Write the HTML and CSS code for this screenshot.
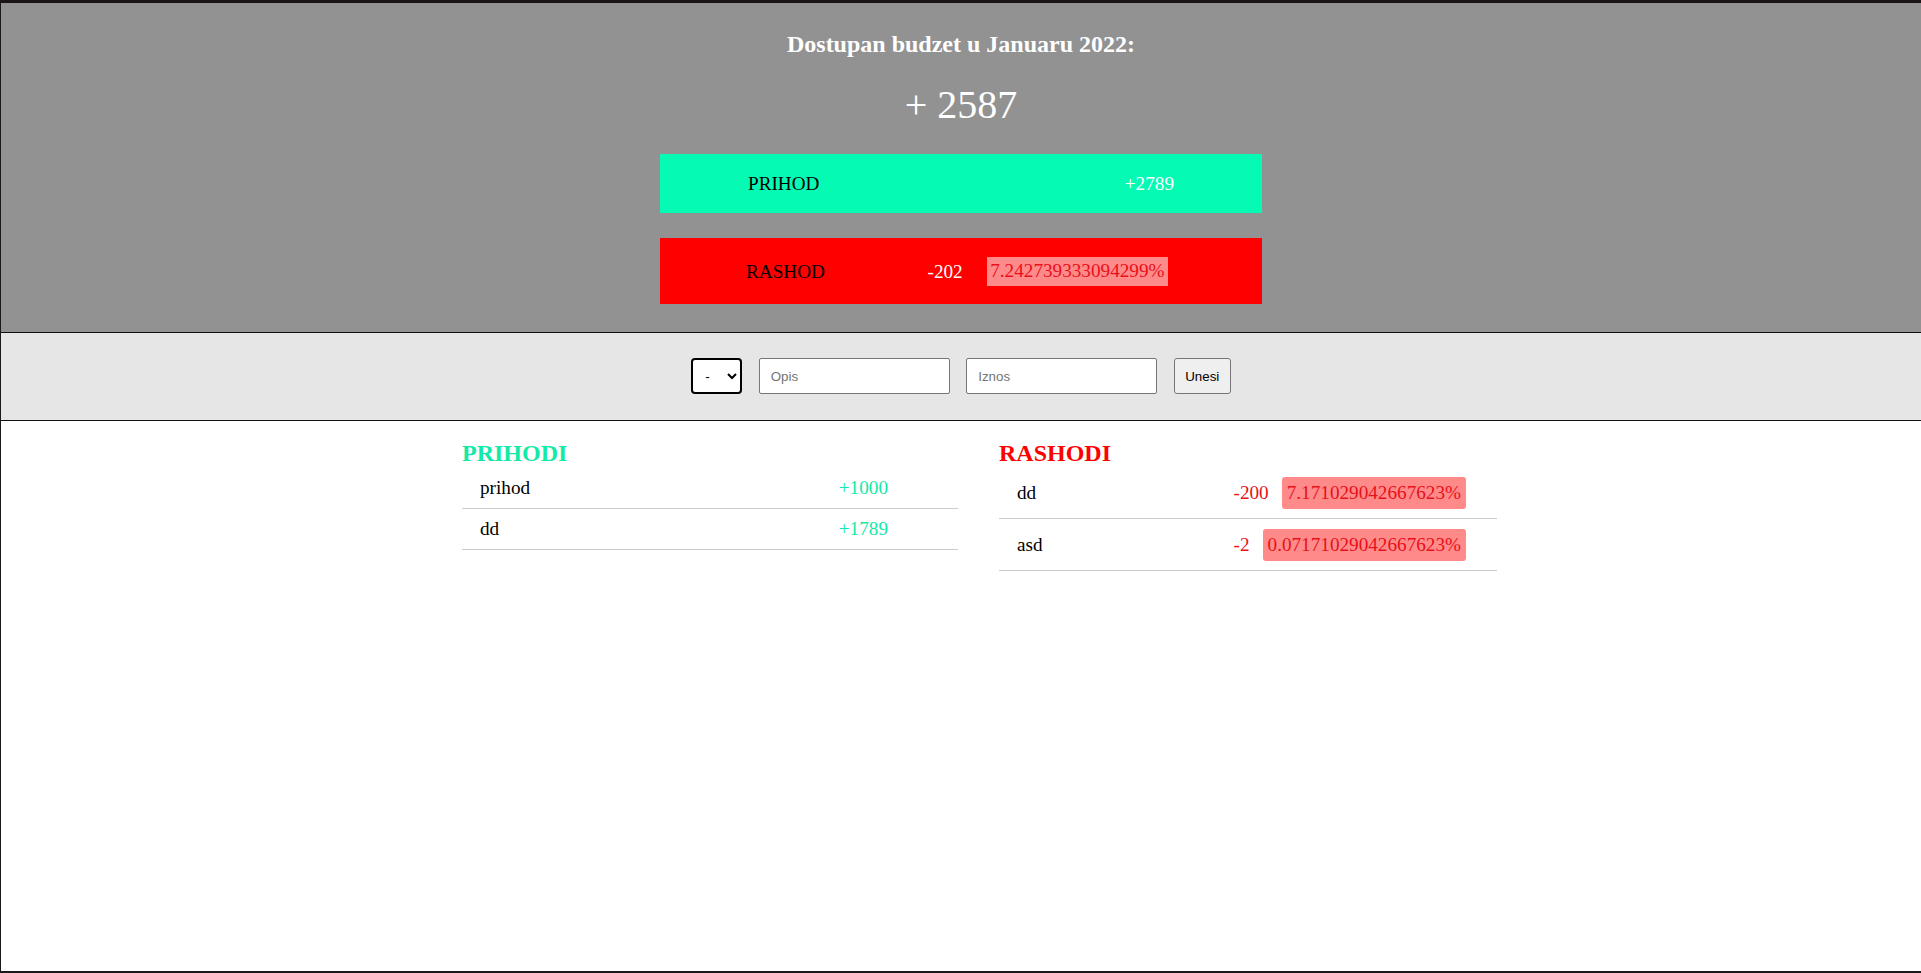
FILE: index.html
```html
<!DOCTYPE html>
<html lang="sr">
<head>
<meta charset="utf-8">
<title>Budzet</title>
<link rel="stylesheet" href="styles.css">
</head>
<body>
<div class="frame">
  <header class="top">
    <h2 class="title">Dostupan budzet u Januaru 2022:</h2>
    <div class="total">+ 2587</div>
    <div class="sum sum-inc">
      <span class="sum-label">PRIHOD</span>
      <span class="sum-val">+2789</span>
    </div>
    <div class="sum sum-exp">
      <span class="sum-label">RASHOD</span>
      <div class="sum-right">
        <span class="sum-val">-202</span>
        <span class="pct pct-top">7.242739333094299%</span>
      </div>
    </div>
  </header>

  <section class="entry">
    <select class="type">
      <option>-</option>
      <option>+</option>
    </select>
    <input class="field" type="text" placeholder="Opis">
    <input class="field" type="text" placeholder="Iznos">
    <button class="submit" type="button">Unesi</button>
  </section>

  <main class="lists">
    <section class="col col-inc">
      <h2 class="col-title">PRIHODI</h2>
      <div class="row">
        <span class="desc">prihod</span>
        <span class="val">+1000</span>
      </div>
      <div class="row">
        <span class="desc">dd</span>
        <span class="val">+1789</span>
      </div>
    </section>
    <section class="col col-exp">
      <h2 class="col-title">RASHODI</h2>
      <div class="row">
        <span class="desc">dd</span>
        <div class="row-right">
          <span class="val">-200</span>
          <span class="pct">7.171029042667623%</span>
        </div>
      </div>
      <div class="row">
        <span class="desc">asd</span>
        <div class="row-right">
          <span class="val">-2</span>
          <span class="pct">0.07171029042667623%</span>
        </div>
      </div>
    </section>
  </main>
</div>
</body>
</html>
```

FILE: styles.css
```css
html, body {
  margin: 0;
  padding: 0;
  background: #ffffff;
}

body {
  font-family: "Liberation Serif", "Times New Roman", serif;
  color: #000;
}

.frame {
  box-sizing: border-box;
  height: 973px;
  border-top: 3px solid #1c1315;
  border-left: 1px solid #1a1a1a;
  border-bottom: 2px solid #1a1a1a;
  background: #fff;
  overflow: hidden;
}

/* ---------- header ---------- */
.top {
  background: #929292;
  padding: 27px 0 28px;
  border-bottom: 1px solid #111;
  display: flex;
  flex-direction: column;
  align-items: center;
}

.title {
  margin: 0;
  font-size: 24px;
  line-height: 28px;
  font-weight: bold;
  color: #fff;
}

.total {
  margin-top: 24px;
  font-size: 40px;
  line-height: 46px;
  color: #fff;
}

.sum {
  box-sizing: border-box;
  width: 602px;
  display: flex;
  justify-content: space-between;
  align-items: center;
  font-size: 19.2px;
  line-height: 23px;
}

.sum-inc {
  margin-top: 26px;
  background: #05fbb4;
  padding: 18px 88px;
}

.sum-exp {
  margin-top: 25px;
  background: #ff0000;
  padding: 18.5px 94px 18.5px 86px;
}

.sum-label {
  color: #000;
}

.sum-val {
  color: #fff;
}

.sum-right {
  display: flex;
  align-items: center;
  gap: 24px;
}

.pct {
  background: #ff8a8a;
  color: #e8101a;
  border-radius: 3px;
  padding: 5px;
  line-height: 22px;
}

.pct-top {
  border-radius: 0;
  padding: 3.5px 3.5px;
  line-height: 22px;
}

/* ---------- entry form ---------- */
.entry {
  background: #e6e6e6;
  padding: 25px 0 26px;
  border-bottom: 1px solid #111;
  display: flex;
  justify-content: center;
  align-items: center;
  gap: 16.5px;
}

.type {
  box-sizing: border-box;
  width: 51px;
  height: 36px;
  border: 2px solid #000;
  border-radius: 4px;
  background: #fff;
  font-family: "Liberation Sans", Arial, sans-serif;
  font-size: 13.33px;
  padding: 0 4px 0 8px;
  color: #000;
}

.field {
  box-sizing: border-box;
  width: 191px;
  height: 36px;
  border: 1px solid #767676;
  border-radius: 2px;
  background: #fff;
  padding: 0 11px;
  font-family: "Liberation Sans", Arial, sans-serif;
  font-size: 13.33px;
  margin: 0;
}

.field::placeholder {
  color: #757575;
}

.submit {
  box-sizing: border-box;
  width: 57px;
  height: 36px;
  border: 1px solid #767676;
  border-radius: 3px;
  background: #efefef;
  font-family: "Liberation Sans", Arial, sans-serif;
  font-size: 13.33px;
  color: #000;
  padding: 0;
  margin: 0;
}

/* ---------- lists ---------- */
.lists {
  box-sizing: border-box;
  width: 1072px;
  margin: 0 auto;
  padding-left: 37px;
  display: grid;
  grid-template-columns: 496px 498px;
  column-gap: 41px;
  align-items: start;
}

.col-title {
  margin: 18px 0 0;
  font-size: 24px;
  line-height: 28px;
  font-weight: bold;
}

.col-inc .col-title,
.col-inc .val {
  color: #12eaa6;
}

.col-exp .col-title {
  color: #ff0000;
}

.col-exp .val {
  color: #e8101a;
}

.row {
  display: flex;
  justify-content: space-between;
  align-items: center;
  border-bottom: 1px solid #cccccc;
  font-size: 19.2px;
  line-height: 22px;
}

.col-inc .row {
  padding: 9.5px 70px 9px 18px;
}

.col-exp .row {
  padding: 9.5px 31px 9.5px 18px;
}

.row-right {
  display: flex;
  align-items: center;
  gap: 13px;
}
```
